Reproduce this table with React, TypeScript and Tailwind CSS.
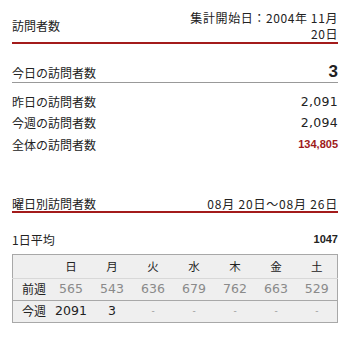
const font = "font-['Noto_Sans_CJK_JP',sans-serif]";

const days = ["日", "月", "火", "水", "木", "金", "土"];
const lastWeek = ["565", "543", "636", "679", "762", "663", "529"];
const thisWeek = ["2091", "3", "-", "-", "-", "-", "-"];

function Row({ label, value, red }: { label: string; value: string; red?: boolean }) {
  return (
    <div className="flex items-center justify-between h-[21.5px]">
      <span className="text-[12px] leading-none text-[#222]">{label}</span>
      {red ? (
        <span className="font-['Liberation_Sans',sans-serif] text-[11px] font-bold leading-none text-[#9e1a1a]">{value}</span>
      ) : (
        <span className="font-['DejaVu_Sans',sans-serif] text-[12.5px] leading-none text-[#222] tracking-[0.3px]">{value}</span>
      )}
    </div>
  );
}

export default function App() {
  return (
    <div className={`${font} bg-white w-[350px] h-[337px] px-[12px] pt-[10px] text-[#222]`}>
      {/* 訪問者数 header */}
      <div className="flex items-center justify-between border-b-2 border-[#a31b1b]">
        <span className="text-[12px] leading-none">訪問者数</span>
        <div className="text-right text-[12px] leading-[16px] tracking-[0.6px]">
          集計開始日：2004年 11月
          <br />
          20日
        </div>
      </div>

      <div className="mt-[19px] flex items-end justify-between border-b border-[#999] pb-[2px]">
        <span className="text-[12px] leading-none mb-[1px]">今日の訪問者数</span>
        <span className="font-['Liberation_Sans',sans-serif] text-[17px] font-bold leading-none">3</span>
      </div>

      <div className="mt-[8px]">
        <Row label="昨日の訪問者数" value="2,091" />
        <Row label="今週の訪問者数" value="2,094" />
        <Row label="全体の訪問者数" value="134,805" red />
      </div>

      {/* 曜日別 */}
      <div className="mt-[40px] flex items-center justify-between border-b-2 border-[#a31b1b]">
        <span className="text-[12px] leading-[15px]">曜日別訪問者数</span>
        <span className="text-[12px] leading-[15px] tracking-[0.8px]">08月 20日～08月 26日</span>
      </div>

      <div className="mt-[21px] flex h-[12px] items-center justify-between">
        <span className="text-[12px] leading-none">1日平均</span>
        <span className="font-['Liberation_Sans',sans-serif] text-[11px] font-bold leading-none">1047</span>
      </div>

      <table className="mt-[8px] w-full table-fixed border border-[#a8a8a8] bg-[#efefef] border-collapse leading-[14px]">
        <thead>
          <tr className="h-[24px] border-b border-[#d8d8d8]">
            <th className="w-[38px] p-0"></th>
            {days.map((d) => (
              <th key={d} className="p-0 text-[11.5px] font-normal text-[#222] text-center">{d}</th>
            ))}
          </tr>
        </thead>
        <tbody>
          <tr className="h-[22px] border-b border-[#a8a8a8]">
            <td className="p-0 text-[12px] text-left pl-[9px] whitespace-nowrap">前週</td>
            {lastWeek.map((v, i) => (
              <td key={i} className="p-0 font-['DejaVu_Sans',sans-serif] text-[12.5px] text-[#8a8a8a] text-center">{v}</td>
            ))}
          </tr>
          <tr className="h-[22px]">
            <td className="p-0 text-[12px] text-left pl-[9px] whitespace-nowrap">今週</td>
            {thisWeek.map((v, i) => (
              <td key={i} className={`p-0 font-['DejaVu_Sans',sans-serif] text-center ${v === "-" ? "text-[9px] text-[#999]" : "text-[12.5px] text-[#222]"}`}>{v}</td>
            ))}
          </tr>
        </tbody>
      </table>
    </div>
  );
}
